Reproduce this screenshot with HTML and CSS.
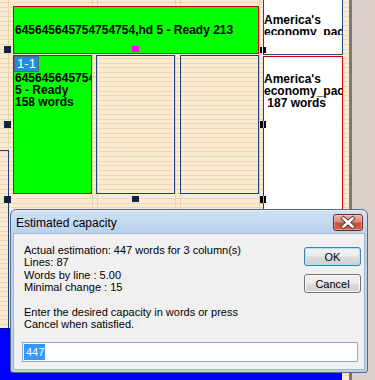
FILE: index.html
```html
<!DOCTYPE html>
<html lang="en">
<head>
<meta charset="utf-8">
<title>Estimated capacity</title>
<link rel="stylesheet" href="styles.css">
</head>
<body>
<div class="screen">
  <div class="canvas">
    <div class="frames">
      <div class="frame green top-frame"><span class="ftext">645645645754754754,hd 5 - Ready 213</span></div>
      <div class="frame white box1"><div class="clip ftext">America's<br><span class="nowrap">economy_package</span></div></div>
      <div class="frame green col1">
        <div class="tag">1-1</div>
        <div class="ftext"><span class="nowrap">645645645754754754,hd</span><br>5 - Ready<br>158 words</div>
      </div>
      <div class="frame empty col2"></div>
      <div class="frame empty col3"></div>
      <div class="frame white box2"><div class="ftext">America's<br><span class="nowrap">economy_package</span><br>&nbsp;187 words</div></div>
    </div>
    <div class="side-frame"></div>
    <div class="blue-frame"></div>
    <span class="handle h-tl"></span>
    <span class="handle h-tm"></span>
    <span class="handle split white-split h-tr"></span>
    <span class="handle h-ml"></span>
    <span class="handle split h-mr"></span>
    <span class="handle h-bl"></span>
    <span class="handle h-bm"></span>
    <span class="handle split h-br"></span>
  </div>
  <div class="sep"></div>
  <div class="gutter"></div>

  <div class="dialog">
    <div class="titlebar">
      <span class="title">Estimated capacity</span>
      <span class="close">
        <svg width="30" height="17" viewBox="0 0 30 17">
          <path d="M10.5 4.5 L19.5 12.5 M19.5 4.5 L10.5 12.5" stroke="#5a3a36" stroke-width="4.4" stroke-linecap="square" fill="none"/>
          <path d="M10.5 4.5 L19.5 12.5 M19.5 4.5 L10.5 12.5" stroke="#ffffff" stroke-width="2.6" stroke-linecap="square" fill="none"/>
        </svg>
      </span>
    </div>
    <div class="body">
      <div class="main">
        <div class="msg">Actual estimation: 447 words for 3 column(s)
Lines: 87
Words by line : 5.00
Minimal change : 15

Enter the desired capacity in words or press
Cancel when satisfied.</div>
        <div class="buttons">
          <button class="btn default">OK</button>
          <button class="btn">Cancel</button>
        </div>
      </div>
      <div class="field"><span class="sel">447</span></div>
    </div>
  </div>
</div>
</body>
</html>
```

FILE: styles.css
```css
html, body {
  margin: 0;
  padding: 0;
}
body {
  width: 375px;
  height: 380px;
  overflow: hidden;
  font-family: "Liberation Sans", Arial, sans-serif;
}
.screen {
  position: relative;
  width: 375px;
  height: 380px;
  display: flex;
  overflow: hidden;
  background: #dcd0cd;
}
.canvas {
  position: relative;
  width: 349px;
  height: 380px;
  flex: none;
  overflow: hidden;
  background-color: #fcebd3;
  background-image:
    linear-gradient(#e8d2ac, #e8d2ac),
    linear-gradient(#e8d2ac, #e8d2ac),
    linear-gradient(#e8d2ac, #e8d2ac),
    linear-gradient(#e8d2ac, #e8d2ac),
    linear-gradient(#e8d2ac, #e8d2ac),
    linear-gradient(#e8d2ac, #e8d2ac),
    linear-gradient(to bottom, #ecd8b6 0 1px, transparent 1px 5px, #ecd8b6 5px 6px, transparent 6px 9px, #ecd8b6 9px 10px, transparent 10px 14px);
  background-size: 1px 100%, 1px 100%, 1px 100%, 1px 100%, 1px 100%, 1px 100%, 100% 14px;
  background-position: 8px 0, 92px 0, 97px 0, 175px 0, 180px 0, 259px 0, 0 2px;
  background-repeat: no-repeat, no-repeat, no-repeat, no-repeat, no-repeat, no-repeat, repeat;
}
.sep {
  width: 3px;
  flex: none;
  background: #7b7777;
}
.gutter {
  flex: 1;
  background: #dcd0cd;
}

/* layout frames */
.frames {
  display: grid;
  grid-template-columns: 83px 84px 83px 80px;
  grid-template-rows: 55px auto;
  padding-left: 13px;
}
.frame {
  box-sizing: border-box;
  border: 1px solid #d40000;
  overflow: hidden;
}
.ftext {
  font-weight: bold;
  font-size: 12px;
  line-height: 12px;
  color: #000;
}
.nowrap {
  white-space: nowrap;
}
.green {
  background: #00ff00;
}
.white {
  background: #ffffff;
}
.top-frame {
  grid-column: 1 / 4;
  grid-row: 1;
  width: 246px;
  height: 48px;
  margin-top: 6px;
  display: flex;
  align-items: center;
  padding-left: 1px;
  white-space: nowrap;
}
.box1 {
  grid-column: 4;
  grid-row: 1;
  width: 80px;
  height: 65px;
  margin-top: -10px;
  border-color: #1f4a86;
}
.box1 .clip {
  margin-top: 23px;
  height: 21px;
  overflow: hidden;
}
.col1 {
  grid-column: 1;
  grid-row: 2;
  width: 79px;
  height: 139px;
}
.col1 .ftext {
  padding-left: 1px;
}
.tag {
  box-sizing: border-box;
  width: 25px;
  height: 16px;
  background: #1f8ce0;
  border: 1px solid #56687c;
  color: #fff;
  font-size: 13px;
  line-height: 14px;
  text-align: center;
}
.empty {
  border-color: #1e3f7c;
  width: 79px;
  height: 139px;
}
.col2 {
  grid-column: 2;
  grid-row: 2;
}
.col3 {
  grid-column: 3;
  grid-row: 2;
}
.box2 {
  grid-column: 4;
  grid-row: 2;
  width: 80px;
  height: 274px;
  margin-top: 1px;
  padding-top: 16px;
}

/* off-page frames drawn on the canvas */
.side-frame {
  position: absolute;
  left: -12px;
  top: 150px;
  width: 21px;
  height: 220px;
  box-sizing: border-box;
  border: 1px solid #1e3f7c;
}
.blue-frame {
  position: absolute;
  left: -2px;
  top: 328px;
  width: 344px;
  height: 60px;
  background: #0000ff;
  border-top: 1px solid #00008c;
}

/* selection handles */
.handle {
  position: absolute;
  width: 7px;
  height: 7px;
  background: #15223c;
}
.handle.split {
  width: 6px;
  background: linear-gradient(90deg, #000 0 3px, #3fe0ee 3px 4px, #000 4px);
}
.handle.white-split {
  height: 6px;
  background: linear-gradient(90deg, #000 0 2px, #fff 2px 3px, #000 3px);
}
.h-tl { left: 4px; top: 46px; }
.h-tm { left: 132px; top: 46px; height: 6px; background: #ff00ff; }
.h-tr { left: 260px; top: 47px; }
.h-ml { left: 4px; top: 121px; }
.h-mr { left: 260px; top: 121px; }
.h-bl { left: 4px; top: 196px; }
.h-bm { left: 132px; top: 196px; height: 6px; }
.h-br { left: 260px; top: 196px; }

/* dialog */
.dialog {
  position: absolute;
  left: 10px;
  top: 209px;
  width: 358px;
  height: 164px;
  box-sizing: border-box;
  border: 1px solid #566980;
  border-radius: 6px 6px 3px 3px;
  background: linear-gradient(#d0e1f4, #bcd2eb 22px, #b9d1ea);
  box-shadow: inset 0 1px 0 #e6f0fa;
  padding: 0 2px 2px;
  display: flex;
  flex-direction: column;
}
.titlebar {
  height: 23px;
  flex: none;
  display: flex;
  align-items: center;
  justify-content: space-between;
  padding: 0 2px 0 3px;
}
.title {
  font-size: 12px;
  color: #000;
  padding-top: 2px;
}
.close {
  display: block;
  box-sizing: border-box;
  width: 30px;
  height: 17px;
  border: 1px solid #6e2c22;
  border-radius: 3px;
  background: linear-gradient(#eab0a3, #d98a7a 45%, #c4513b 55%, #c9644c);
  box-shadow: inset 0 0 0 1px rgba(255, 220, 210, 0.45);
  margin-top: 1px;
}
.close svg {
  display: block;
  margin: -1px 0 0 -1px;
}
.body {
  flex: 1;
  box-sizing: border-box;
  background: #f0f0f0;
  border: 1px solid #a4b7cd;
  display: flex;
  flex-direction: column;
}
.main {
  display: flex;
  justify-content: space-between;
  padding: 10px 3px 0 10px;
}
.msg {
  white-space: pre-line;
  font-size: 11px;
  line-height: 12.4px;
  color: #000;
}
.buttons {
  display: flex;
  flex-direction: column;
  gap: 8px;
  margin-top: 3px;
}
.btn {
  box-sizing: border-box;
  width: 57px;
  height: 19px;
  padding: 0;
  margin: 0;
  font-family: "Liberation Sans", Arial, sans-serif;
  font-size: 11px;
  color: #000;
  border: 1px solid #707070;
  border-radius: 3px;
  background: linear-gradient(#f2f2f2 0, #ebebeb 48%, #dddddd 52%, #cfcfcf 100%);
  box-shadow: inset 0 0 0 1px #fcfcfc;
}
.btn.default {
  border-color: #3c7fb1;
  box-shadow: inset 0 0 0 1px #a8e4fb;
}
.field {
  box-sizing: border-box;
  height: 20px;
  margin: 11px 6px 0 8px;
  background: #fff;
  border: 1px solid #84acdb;
  padding: 0 0 0 1px;
  display: flex;
  align-items: center;
}
.sel {
  background: #3399ff;
  color: #fff;
  font-size: 11px;
  line-height: 16px;
  height: 16px;
  padding: 0 1px 0 2px;
}
```
